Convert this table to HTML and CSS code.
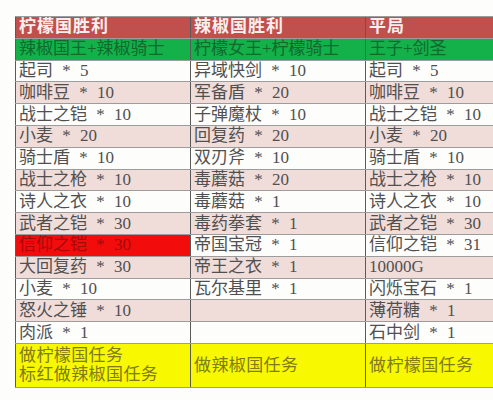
FILE: index.html
```html
<!DOCTYPE html>
<html lang="zh-CN">
<head>
<meta charset="utf-8">
<title>奖励表</title>
<link rel="stylesheet" href="styles.css">
</head>
<body>
<table class="rewards">
  <colgroup>
    <col class="c1"><col class="c2"><col class="c3">
  </colgroup>
  <tr class="head"><td>柠檬国胜利</td><td>辣椒国胜利</td><td>平局</td></tr>
  <tr class="green"><td>辣椒国王+辣椒骑士</td><td>柠檬女王+柠檬骑士</td><td>王子+剑圣</td></tr>
  <tr class="w"><td>起司 * 5</td><td>异域快剑 * 10</td><td>起司 * 5</td></tr>
  <tr class="p"><td>咖啡豆 * 10</td><td>军备盾 * 20</td><td>咖啡豆 * 10</td></tr>
  <tr class="w"><td>战士之铠 * 10</td><td>子弹魔杖 * 10</td><td>战士之铠 * 10</td></tr>
  <tr class="p"><td>小麦 * 20</td><td>回复药 * 20</td><td>小麦 * 20</td></tr>
  <tr class="w"><td>骑士盾 * 10</td><td>双刃斧 * 10</td><td>骑士盾 * 10</td></tr>
  <tr class="p"><td>战士之枪 * 10</td><td>毒蘑菇 * 20</td><td>战士之枪 * 10</td></tr>
  <tr class="w"><td>诗人之衣 * 10</td><td>毒蘑菇 * 1</td><td>诗人之衣 * 10</td></tr>
  <tr class="p"><td>武者之铠 * 30</td><td>毒药拳套 * 1</td><td>武者之铠 * 30</td></tr>
  <tr class="w"><td class="red">信仰之铠 * 30</td><td>帝国宝冠 * 1</td><td>信仰之铠 * 31</td></tr>
  <tr class="p"><td>大回复药 * 30</td><td>帝王之衣 * 1</td><td>10000G</td></tr>
  <tr class="w"><td>小麦 * 10</td><td>瓦尔基里 * 1</td><td>闪烁宝石 * 1</td></tr>
  <tr class="p"><td>怒火之锤 * 10</td><td></td><td>薄荷糖 * 1</td></tr>
  <tr class="w"><td>肉派 * 1</td><td></td><td>石中剑 * 1</td></tr>
  <tr class="yellow"><td>做柠檬国任务<br>标红做辣椒国任务</td><td>做辣椒国任务</td><td>做柠檬国任务</td></tr>
</table>
</body>
</html>
```
FILE: styles.css
```css
html, body {
  margin: 0;
  padding: 0;
  background: #fdfdfc;
  overflow: hidden;
}

.rewards {
  margin: 16px 0 0 15px;
  border-collapse: collapse;
  table-layout: fixed;
  width: 480px;
  font-family: "Liberation Serif", "Noto Sans CJK SC", serif;
  font-size: 17px;
  color: #505050;
}

.c1 { width: 175px; }
.c2 { width: 175px; }
.c3 { width: 130px; }

.rewards td {
  height: 20.8px;
  padding: 0 3px;
  line-height: 20px;
  border-top: 1px solid #9c9c9c;
  border-bottom: 1px solid #9c9c9c;
  border-left: 1px solid #5a5a5a;
  white-space: nowrap;
  overflow: hidden;
  word-spacing: 5px;
  vertical-align: middle;
}

.head td {
  background: #c0504d;
  color: #fbeeee;
  font-weight: bold;
  letter-spacing: 1px;
}

.green td {
  background: #14b04a;
  color: #0f6a2e;
}

.w td { background: #fdfdfc; }
.p td { background: #f0dcd9; }

.rewards td.red {
  background: #f20c0c;
  color: #a40a0a;
}

.yellow td {
  height: 43px;
  background: #f8f800;
  color: #7e7c18;
  line-height: 19px;
  letter-spacing: 0.4px;
}
```
